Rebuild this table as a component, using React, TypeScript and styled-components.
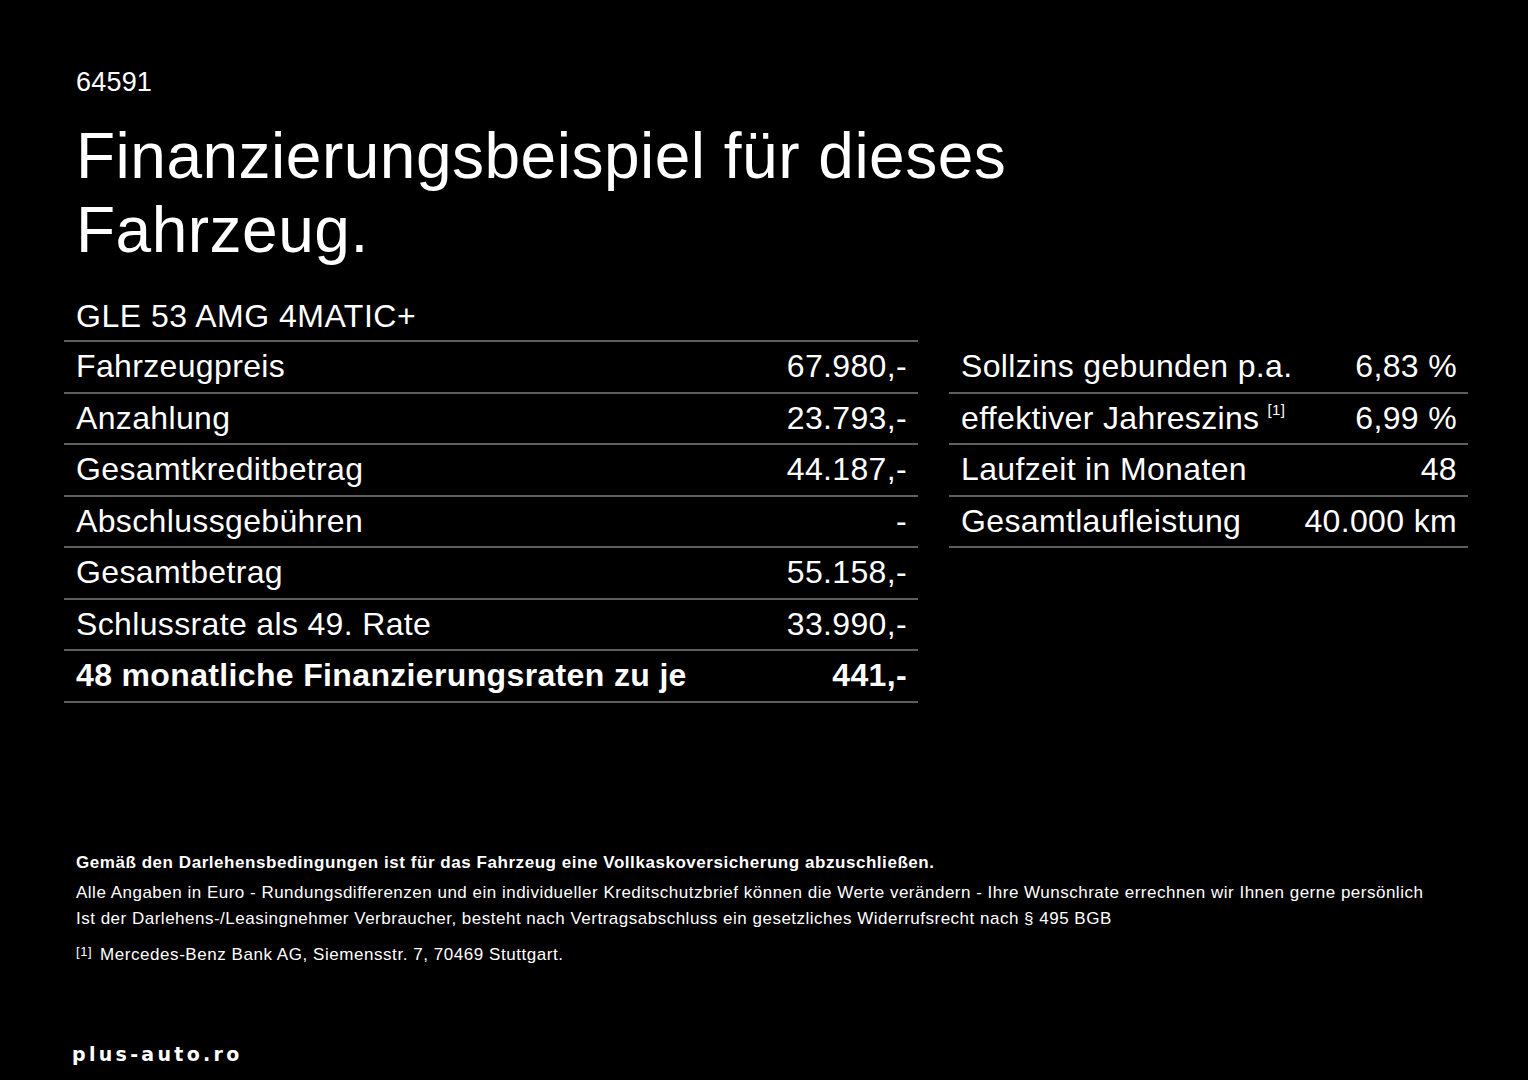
import React from 'react';
import styled, { createGlobalStyle } from 'styled-components';

const GlobalStyle = createGlobalStyle`
  html, body {
    margin: 0;
    padding: 0;
    background: #000;
  }
  body {
    font-family: 'Liberation Sans', Arial, sans-serif;
    color: #fff;
  }
`;

const Page = styled.div`
  width: 1528px;
  height: 1080px;
  box-sizing: border-box;
  padding: 67px 60px 0 64px;
  display: flex;
  flex-direction: column;
  background: #000;
  overflow: hidden;
`;

const OfferId = styled.div`
  font-size: 27px;
  line-height: 31px;
  padding-left: 12px;
  letter-spacing: 0.2px;
`;

const Title = styled.h1`
  margin: 21px 0 0;
  padding-left: 12px;
  font-size: 64px;
  line-height: 74px;
  font-weight: 400;
  letter-spacing: 0.5px;
`;

const Model = styled.div`
  margin-top: 29px;
  padding: 0 0 4px 12px;
  font-size: 32px;
  line-height: 40px;
  width: 842px;
  letter-spacing: 0.5px;
  border-bottom: 2px solid #5e5e5e;
`;

const Tables = styled.div`
  display: flex;
  align-items: flex-start;
  gap: 31px;
`;

const Table = styled.div<{ $width: number }>`
  width: ${(p) => p.$width}px;
  display: flex;
  flex-direction: column;
`;

const Row = styled.div<{ $strong?: boolean }>`
  height: 51.5px;
  box-sizing: border-box;
  display: flex;
  align-items: center;
  justify-content: space-between;
  padding: 0 11px 0 12px;
  border-bottom: 2px solid #5e5e5e;
  font-size: 32px;
  font-weight: ${(p) => (p.$strong ? 700 : 400)};
  letter-spacing: 0.35px;
`;

const Label = styled.span`
  white-space: nowrap;
`;

const Value = styled.span`
  white-space: nowrap;
  text-align: right;
`;

const Ref = styled.sup`
  font-size: 15px;
  line-height: 0;
  margin-left: 8px;
  vertical-align: 14px;
`;

const Notes = styled.div`
  margin-top: 147px;
  padding-left: 12px;
  display: flex;
  flex-direction: column;
`;

const NoteStrong = styled.p`
  margin: 0 0 4px;
  font-size: 17px;
  line-height: 26px;
  font-weight: 700;
  letter-spacing: 0.55px;
`;

const Note = styled.p`
  margin: 0;
  font-size: 17px;
  line-height: 26px;
  letter-spacing: 0.5px;
`;

const Footnote = styled.p`
  margin: 7px 0 0;
  font-size: 17px;
  line-height: 26px;
  letter-spacing: 0.55px;
`;

const FootRef = styled.span`
  font-size: 13px;
  vertical-align: 4px;
  margin-right: 8px;
`;

const Brand = styled.div`
  margin-top: auto;
  margin-bottom: 14px;
  padding-left: 8px;
  font-family: 'DejaVu Sans', sans-serif;
  font-weight: 700;
  font-size: 19px;
  letter-spacing: 3.3px;
  line-height: 24px;
`;

type Item = { label: React.ReactNode; value: string; strong?: boolean };

const credit: Item[] = [
  { label: 'Fahrzeugpreis', value: '67.980,-' },
  { label: 'Anzahlung', value: '23.793,-' },
  { label: 'Gesamtkreditbetrag', value: '44.187,-' },
  { label: 'Abschlussgebühren', value: '-' },
  { label: 'Gesamtbetrag', value: '55.158,-' },
  { label: 'Schlussrate als 49. Rate', value: '33.990,-' },
  { label: '48 monatliche Finanzierungsraten zu je', value: '441,-', strong: true },
];

const terms: Item[] = [
  { label: 'Sollzins gebunden p.a.', value: '6,83 %' },
  {
    label: (
      <>
        effektiver Jahreszins<Ref>[1]</Ref>
      </>
    ),
    value: '6,99 %',
  },
  { label: 'Laufzeit in Monaten', value: '48' },
  { label: 'Gesamtlaufleistung', value: '40.000 km' },
];

export default function App() {
  return (
    <Page>
      <GlobalStyle />
      <OfferId>64591</OfferId>
      <Title>
        Finanzierungsbeispiel für dieses
        <br />
        Fahrzeug.
      </Title>
      <Model>GLE 53 AMG 4MATIC+</Model>
      <Tables>
        <Table $width={854}>
          {credit.map((item, i) => (
            <Row key={i} $strong={item.strong}>
              <Label>{item.label}</Label>
              <Value>{item.value}</Value>
            </Row>
          ))}
        </Table>
        <Table $width={519}>
          {terms.map((item, i) => (
            <Row key={i}>
              <Label>{item.label}</Label>
              <Value>{item.value}</Value>
            </Row>
          ))}
        </Table>
      </Tables>
      <Notes>
        <NoteStrong>
          Gemäß den Darlehensbedingungen ist für das Fahrzeug eine Vollkaskoversicherung abzuschließen.
        </NoteStrong>
        <Note>
          Alle Angaben in Euro - Rundungsdifferenzen und ein individueller Kreditschutzbrief können die Werte
          verändern - Ihre Wunschrate errechnen wir Ihnen gerne persönlich
        </Note>
        <Note>
          Ist der Darlehens-/Leasingnehmer Verbraucher, besteht nach Vertragsabschluss ein gesetzliches
          Widerrufsrecht nach § 495 BGB
        </Note>
        <Footnote>
          <FootRef>[1]</FootRef>Mercedes-Benz Bank AG, Siemensstr. 7, 70469 Stuttgart.
        </Footnote>
      </Notes>
      <Brand>plus-auto.ro</Brand>
    </Page>
  );
}
